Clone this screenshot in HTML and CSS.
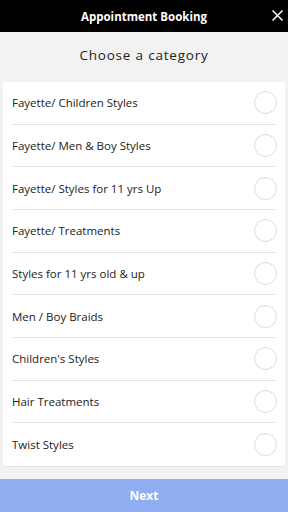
FILE: index.html
```html
<!DOCTYPE html>
<html>
<head>
<meta charset="utf-8">
<link rel="stylesheet" href="styles.css">
</head>
<body>
<div class="app">
  <header class="topbar">
    <span class="title">Appointment Booking</span>
    <svg class="close" width="11" height="11" viewBox="0 0 11 11"><path d="M1 1L10 10M10 1L1 10" stroke="#fff" stroke-width="1.5" stroke-linecap="square"/></svg>
  </header>
  <main class="content">
    <h1 class="heading">Choose a category</h1>
    <ul class="card">
      <li class="row"><span>Fayette/ Children Styles</span><i class="radio"></i></li>
      <li class="row"><span>Fayette/ Men &amp; Boy Styles</span><i class="radio"></i></li>
      <li class="row"><span>Fayette/ Styles for 11 yrs Up</span><i class="radio"></i></li>
      <li class="row"><span>Fayette/ Treatments</span><i class="radio"></i></li>
      <li class="row"><span>Styles for 11 yrs old &amp; up</span><i class="radio"></i></li>
      <li class="row"><span>Men / Boy Braids</span><i class="radio"></i></li>
      <li class="row"><span>Children's Styles</span><i class="radio"></i></li>
      <li class="row"><span>Hair Treatments</span><i class="radio"></i></li>
      <li class="row"><span>Twist Styles</span><i class="radio"></i></li>
    </ul>
  </main>
  <button class="next">Next</button>
</div>
</body>
</html>
```
FILE: styles.css
```css
* { box-sizing: border-box; }
html, body { margin: 0; padding: 0; }
body {
  font-family: "Open Sans", "Liberation Sans", sans-serif;
  background: #f2f2f2;
  width: 288px;
  height: 512px;
  overflow: hidden;
}
.app {
  display: flex;
  flex-direction: column;
  height: 512px;
}
.topbar {
  position: relative;
  height: 32px;
  background: #000;
  display: flex;
  align-items: center;
  justify-content: center;
}
.title {
  color: #fff;
  font-weight: 700;
  font-size: 11.5px;
}
.close {
  position: absolute;
  right: 5px;
  top: 10px;
}
.content {
  flex: 1;
  display: flex;
  flex-direction: column;
}
.heading {
  margin: 0 0 4px;
  height: 46px;
  display: flex;
  align-items: center;
  justify-content: center;
  font-size: 13.5px;
  font-weight: 400;
  letter-spacing: 0.8px;
  color: #222;
}
.card {
  list-style: none;
  margin: 0 3px;
  padding: 0 9px;
  background: #fff;
  border-bottom: 1px solid #e6e6e6;
}
.row {
  height: 42.67px;
  display: flex;
  align-items: center;
  justify-content: space-between;
  border-bottom: 1px solid #e3e3e3;
  font-size: 11.5px;
  color: #222;
}
.row:last-child { border-bottom: none; }
.radio {
  width: 23px;
  height: 23px;
  border-radius: 50%;
  border: 1px solid #dcdcdc;
  margin-right: -1px;
}
.next {
  margin-top: auto;
  height: 33px;
  border: none;
  background: #8fadf0;
  color: #fff;
  font-family: "Open Sans", "Liberation Sans", sans-serif;
  font-weight: 700;
  font-size: 12px;
}
```
